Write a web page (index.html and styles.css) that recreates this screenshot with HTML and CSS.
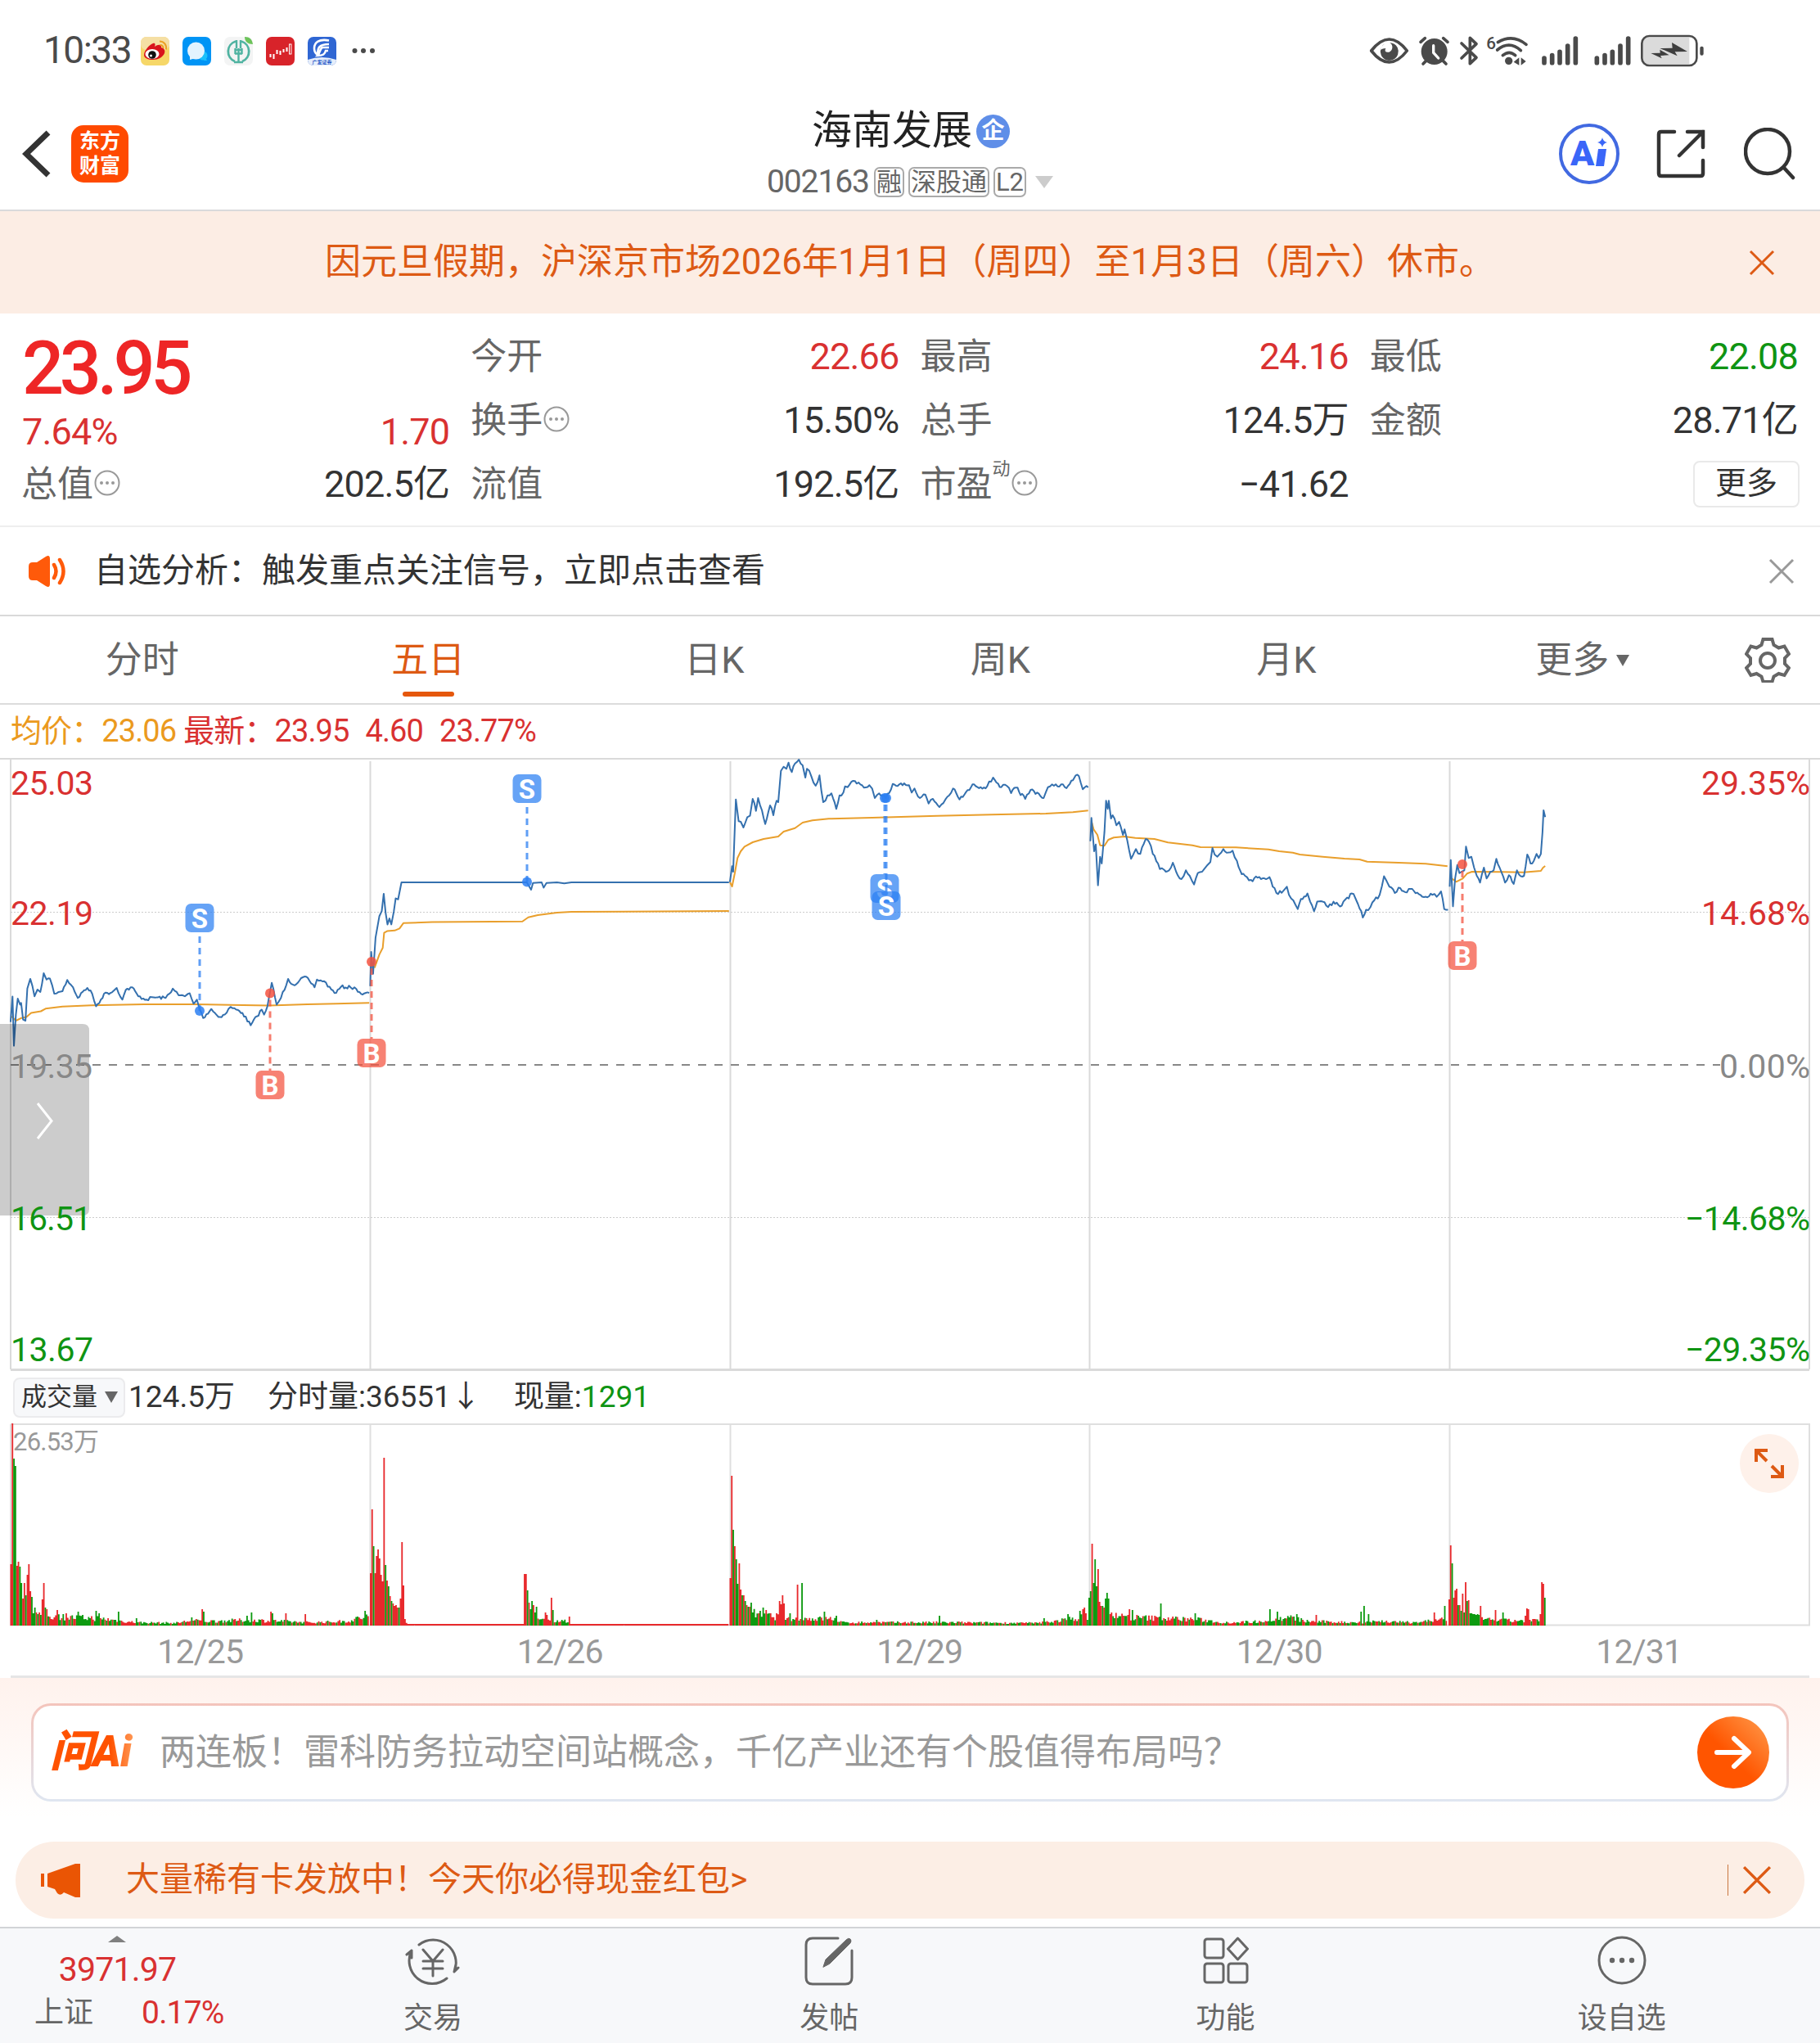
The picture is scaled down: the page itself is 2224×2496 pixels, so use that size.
FILE: index.html
```
<!DOCTYPE html>
<html lang="zh-CN">

<head>
  <meta charset="utf-8">
  <meta name="viewport" content="width=device-width">
  <title>海南发展 002163</title>
  <link rel="stylesheet" href="styles.css">
</head>

<body>
  <div class="status">
    <span class="time">10:33</span>
    <div class="apps">
      <svg class="app" viewBox="0 0 35 35">
        <rect width="35" height="35" rx="7" fill="#f6d768"/>
        <rect width="35" height="16" rx="7" fill="#f5dfa4"/>
        <path d="M4 22C4 17 11 9 15 8c3-1 3 2 2 4 4-3 9-3 8 1 4 1 5 4 4 7-2 5-8 8-14 8C9 28 4 26 4 22z" fill="#d9141c"/>
        <ellipse cx="14" cy="21" rx="8.5" ry="6" fill="#fff"/>
        <circle cx="14" cy="22" r="4.8" fill="#111"/>
        <circle cx="12.5" cy="23" r="1.5" fill="#fff"/>
        <path d="M23 5.500c5 0 9 4 8 10M23.500 10c3 0 4 2 4 4" fill="none" stroke="#eba126" stroke-width="2"/>
      </svg>
      <svg class="app" viewBox="0 0 35 35">
        <rect width="35" height="35" rx="7" fill="#0094f5"/>
        <circle cx="25" cy="23" r="5.5" fill="#1cc0fb"/>
        <path d="M26 29l4 0-2-4z" fill="#1cc0fb"/>
        <circle cx="16.5" cy="17" r="10.5" fill="#e3f3fe"/>
        <path d="M9 22l0 6 7-2z" fill="#e3f3fe"/>
      </svg>
      <svg class="app" viewBox="0 0 35 35">
        <rect width="35" height="35" rx="7" fill="#f3f4f4"/>
        <path d="M14 5.500A13 13 0 0 0 13 30M21 5.500A13 13 0 0 1 22 30" fill="none" stroke="#4fb3a1" stroke-width="2.8"/>
        <path d="M17.500 14v18M12 31h11M15 4v10M20 4v10M13 16h9M13 20.500h9M13.500 14v7M21.500 14v7" stroke="#4fb3a1" stroke-width="2.4" fill="none"/>
        <path d="M25 0c6 0 9 3 10 9-6 0-10-3-10-9z" fill="#6cc35a"/>
      </svg>
      <svg class="app" viewBox="0 0 35 35">
        <rect width="35" height="35" rx="7" fill="#d8232a"/>
        <path d="M5.500 21v4M9.500 21v6M13.500 16v5M17.500 17v5M21.500 15v4M25.500 13v5" stroke="#fff" stroke-width="2"/>
        <rect x="28.5" y="9" width="2.4" height="12" fill="none" stroke="#fff" stroke-width="1"/>
      </svg>
      <svg class="app" viewBox="0 0 35 35">
        <rect width="35" height="35" rx="7" fill="#2f66d3"/>
        <path d="M0 28q17-6 35 0a7 7 0 0 1-7 7H7a7 7 0 0 1-7-7z" fill="#e6eefb"/>
        <path d="M26 4.500C14 2 8 7 8 14c0 4 1 6 4 8 0-9 2-13 14-13M26 13h-8c-3 1-3 7-6 10 7 0 9-2 10-6h3" fill="none" stroke="#fff" stroke-width="2.6"/>
        <text class="gf" x="17.5" y="33">广发证券</text>
      </svg>
    </div>
    <svg class="dots" viewBox="0 0 28 8"><circle cx="3.5" cy="4" r="3"/><circle cx="14" cy="4" r="3"/><circle cx="25" cy="4" r="3"/></svg>
    <svg class="sys" viewBox="40 50 1230 150">
      <g fill="none" stroke="#4a4a4a" stroke-width="11" stroke-linecap="round" stroke-linejoin="round">
        <path d="M48 125q66-84 131 0q-65 84-131 0z"/>
        <path d="M229 93l16-14M328 93l-16-14M238 173l10-10M322 173l-10-10"/>
        <path d="M379 98l54 52-23 22V78l23 22-54 52"/>
        <path d="M512 94q54-32 104 8M510 122q44-36 86 2M530 142q24-20 46 0"/>
      </g>
      <g fill="#4a4a4a">
        <path d="M102 97a33 33 0 1 0 42 16a33 33 0 0 0-28-17a19 19 0 0 1-3 34q-20 2-12-14-12 0-18 5 2-18 19-24z"/>
        <circle cx="279" cy="128" r="48"/>
        <circle cx="552" cy="162" r="14"/>
        <path d="M590 150v28l-20-12zM597 150v28l18-14z"/>
        <path d="M1106 116l46-1-2-20 57 33-46 1 9 15z"/>
        <path d="M1073 134l34-1-1-12 34 20-32 2 5 10z"/>
        <rect x="1253" y="109" width="13" height="33" rx="6"/>
      </g>
      <path d="M276 106v26l18 20" fill="none" stroke="#fff" stroke-width="10" stroke-linecap="round"/>
      <text class="wifi6" x="470" y="118">6</text>
      <g stroke="#4a4a4a" stroke-width="17" stroke-linecap="round">
        <path d="M682 152v17M711 142v27M739 129v40M768 107v62M797 80v89"/>
        <path d="M875 152v17M904 142v27M932 129v40M961 107v62M990 80v89"/>
      </g>
      <path d="M1064 76h150v98h-150q-20 0-20-20v-58q0-20 20-20z" fill="#000" opacity=".14"/>
      <rect x="1040" y="71" width="201" height="108" rx="27" fill="none" stroke="#4a4a4a" stroke-width="8"/>
    </svg>
  </div>

  <header>
    <div class="left">
      <svg class="back" viewBox="0 0 36 60"><path d="M32 4L5 30l27 26"/></svg>
      <div class="logo">东方<br>财富</div>
    </div>
    <div class="title">
      <h1>海南发展<span class="qi">企</span></h1>
      <p><span class="code">002163</span><span class="tag">融</span><span class="tag">深股通</span><span class="tag">L2</span><i class="tri"></i></p>
    </div>
    <div class="right">
      <svg class="ai" viewBox="0 0 74 74">
        <circle cx="37" cy="37" r="35" fill="none" stroke="#4169e1" stroke-width="4"/>
        <text x="14" y="51">A</text>
        <path d="M48 31h10l-3 21H45z" fill="#3a66f8"/>
        <path d="M53 17q1 5 6 6-5 1-6 6-1-5-6-6 5-1 6-6z" fill="#3a66f8"/>
      </svg>
      <svg class="share" viewBox="0 0 60 60"><path d="M22 3H6Q3 3 3 6v48q0 3 3 3h48q3 0 3-3V38M38 3h19v19M57 3L28 32"/></svg>
      <svg class="search" viewBox="0 0 64 64"><circle cx="29" cy="29" r="27"/><path d="M49 49l11 12"/></svg>
    </div>
  </header>

  <div class="notice">
    <span>因元旦假期，沪深京市场2026年1月1日（周四）至1月3日（周六）休市。</span>
    <svg class="close" viewBox="0 0 30 30"><path d="M1 1l28 28M29 1L1 29"/></svg>
  </div>

  <section class="quote">
    <div class="col">
      <div class="price">23.95</div>
      <div class="row change"><b class="up">7.64%</b><b class="up">1.70</b></div>
      <div class="row"><span>总值<svg class="more" viewBox="0 0 32 32"><use href="#dot3"/></svg></span><b>202.5亿</b></div>
    </div>
    <div class="col">
      <div class="row"><span>今开</span><b class="up">22.66</b></div>
      <div class="row"><span>换手<svg class="more" viewBox="0 0 32 32"><use href="#dot3"/></svg></span><b>15.50%</b></div>
      <div class="row"><span>流值</span><b>192.5亿</b></div>
    </div>
    <div class="col">
      <div class="row"><span>最高</span><b class="up">24.16</b></div>
      <div class="row"><span>总手</span><b>124.5万</b></div>
      <div class="row"><span>市盈<sup>动</sup><svg class="more" viewBox="0 0 32 32"><use href="#dot3"/></svg></span><b>−41.62</b></div>
    </div>
    <div class="col">
      <div class="row"><span>最低</span><b class="down">22.08</b></div>
      <div class="row"><span>金额</span><b>28.71亿</b></div>
      <div class="row end"><span class="btn">更多</span></div>
    </div>
    <svg class="defs">
      <g id="dot3">
        <circle cx="16" cy="16" r="14.5" fill="none" stroke="#999" stroke-width="2"/>
        <circle cx="9" cy="16" r="2" fill="#999"/><circle cx="16" cy="16" r="2" fill="#999"/><circle cx="23" cy="16" r="2" fill="#999"/>
      </g>
    </svg>
  </section>

  <div class="signal">
    <svg class="horn" viewBox="0 0 46 38">
      <path d="M0 13q0-5 5-5h5L21 1q5-3 5 3v30q0 6-5 3l-11-7H5q-5 0-5-5z" fill="#ff5a0a"/>
      <path d="M31 11q5 8 0 16M38 5q9 14 0 28" fill="none" stroke="#ff5a0a" stroke-width="4.5" stroke-linecap="round"/>
    </svg>
    <span>自选分析：触发重点关注信号，立即点击查看</span>
    <svg class="close" viewBox="0 0 30 30"><path d="M1 1l28 28M29 1L1 29"/></svg>
  </div>

  <nav class="tabs">
    <a>分时</a>
    <a class="on">五日</a>
    <a>日K</a>
    <a>周K</a>
    <a>月K</a>
    <a>更多<i class="tri"></i></a>
    <svg class="gear" viewBox="0 0 56 56">
      <path d="M22.500 3h11l2 7 6 3.500 7-2 5.500 9.500-5 5v7l5 5-5.500 9-7-2-6 3.500-2 6.500h-11l-2-6.500-6-3.500-7 2-5.500-9 5-5v-7l-5-5 5.500-9.500 7 2 6-3.500z"/>
      <circle cx="28" cy="29" r="9"/>
    </svg>
  </nav>

  <div class="legend">
    <span class="avg">均价：23.06</span>
    <span class="up">最新：23.95</span>
    <span class="up">4.60</span>
    <span class="up">23.77%</span>
  </div>

  <svg class="chart" id="chart" viewBox="0 0 2224 749">
    <g class="grid">
      <path d="M0 1H2224M13 1V747M2211 1V747M452.500 4V747M892.500 4V747M1331.500 4V747M1771.500 4V747"/>
      <path class="dot" d="M13 188.500H2211M13 561.500H2211"/>
      <path class="bottom" d="M13 747.500H2211"/>
      <path class="zero" d="M13 375H2211"/>
    </g>
    <g id="lines"></g>
    <g id="marks"></g>
    <path d="M0 325h101q8 0 8 8v218q0 8-8 8H0z" fill="#000" opacity=".2"/>
    <path d="M46 422l17 21.500-17 21.500" fill="none" stroke="#fff" stroke-width="3"/>
    <rect x="2102" y="360" width="108" height="32" fill="#fff"/>
    <g class="axis">
      <text class="up" x="13" y="45" textLength="101">25.03</text>
      <text class="up" x="13" y="204" textLength="101">22.19</text>
      <text class="flat" x="13" y="391" textLength="100">19.35</text>
      <text class="down" x="13" y="577" textLength="99">16.51</text>
      <text class="down" x="13" y="737" textLength="101">13.67</text>
      <text class="up" x="2079" y="45" textLength="133">29.35%</text>
      <text class="up" x="2079" y="204" textLength="133">14.68%</text>
      <text class="flat" x="2101" y="391" textLength="111">0.00%</text>
      <text class="down" x="2059" y="577" textLength="153">−14.68%</text>
      <text class="down" x="2059" y="737" textLength="153">−29.35%</text>
    </g>
  </svg>

  <div class="volbar">
    <span class="pick">成交量<i class="tri"></i></span>
    <span>124.5万</span>
    <span>分时量:36551↓</span>
    <span>现量:<em class="down">1291</em></span>
  </div>

  <div class="volume">
    <svg viewBox="0 0 2224 248">
      <path d="M13 1H2211V246.500H13V1M452.500 1V246M892.500 1V246M1331.500 1V246M1771.500 1V246" class="frame"/>
      <path id="volUp" fill="#e8292c"/>
      <path id="volDown" fill="#0d9a10"/>
      <text x="16" y="33" textLength="105">26.53万</text>
    </svg>
    <span class="expand">
      <svg viewBox="0 0 36 36"><path d="M2 16V2h14M3 3l12 12M34 20v14H20M33 33L21 21"/></svg>
    </span>
  </div>

  <div class="dates"><span>12/25</span><span>12/26</span><span>12/29</span><span>12/30</span><span>12/31</span></div>

  <section class="ask">
    <div class="box">
      <span class="askai">问Ai</span>
      <span class="hint">两连板！雷科防务拉动空间站概念，千亿产业还有个股值得布局吗？</span>
      <span class="go"><svg viewBox="0 0 46 42"><path d="M3 21h38M24 4l18 17-18 17"/></svg></span>
    </div>
  </section>

  <div class="promo">
    <svg class="mega" viewBox="0 0 48 42"><path d="M0 13h4v16H0zM8 13L42 1h6v41h-6l-14-6q-4 5-8 1l-3-5-9-3z" fill="#ea5504"/></svg>
    <span>大量稀有卡发放中！今天你必得现金红包&gt;</span>
    <i class="sep"></i>
    <svg class="close" viewBox="0 0 30 30"><path d="M1 1l28 28M29 1L1 29"/></svg>
  </div>

  <footer>
    <div class="index">
      <i class="tri"></i>
      <b>3971.97</b>
      <p><span>上证</span><b>0.17%</b></p>
    </div>
    <a>
      <svg viewBox="0 0 68 62"><path d="M17 12A28 28 0 0 1 60 45l2-9M60 45l5-5M51 53A28 28 0 0 1 8 19l-6 5M8 19v9M22 18l12 14 12-14M34 32v18M22 32h24M22 41h24"/></svg>
      <span>交易</span>
    </a>
    <a>
      <svg viewBox="0 0 68 62"><path d="M45 4H14q-8 0-8 8v40q0 8 8 8h40q8 0 8-8V19"/><path d="M27 39l3-9L55 6q3-3 5-1t0 5L35 35z" fill="#666" stroke-width="1"/></svg>
      <span>发帖</span>
    </a>
    <a>
      <svg viewBox="0 0 68 62"><rect x="8" y="5" width="23" height="23" rx="3"/><rect x="8" y="35" width="23" height="23" rx="3"/><rect x="37" y="35" width="23" height="23" rx="3"/><path d="M48.500 4l12 13-12 13-12-13z"/></svg>
      <span>功能</span>
    </a>
    <a>
      <svg viewBox="0 0 68 62"><circle cx="34" cy="31" r="28"/><g fill="#666" stroke="none"><circle cx="22" cy="31" r="3.2"/><circle cx="34" cy="31" r="3.2"/><circle cx="46" cy="31" r="3.2"/></g></svg>
      <span>设自选</span>
    </a>
  </footer>
  <script src="chart.js"></script>
</body>

</html>
```

FILE: styles.css
```
* {
  box-sizing: border-box;
}

html,
body {
  margin: 0;
  width: 100%;
  height: 100%;
}

body {
  display: flex;
  flex-direction: column;
  background: #fff;
  color: #333;
  font-family: Roboto, "Noto Sans CJK SC", sans-serif;
  line-height: 1.2;
  overflow: hidden;
}

body > * {
  flex: none;
}

h1,
p {
  margin: 0;
  font-weight: 400;
}

b,
em,
i {
  font-weight: 400;
  font-style: normal;
}

svg {
  display: block;
  flex: none;
}

.up {
  color: #d93131;
  fill: #d93131;
}

.down {
  color: #0f9413;
  fill: #0f9413;
}

.flat {
  fill: #888;
}

.tri {
  display: inline-block;
  border: 8px solid transparent;
  border-top: 14px solid #666;
  border-bottom: 0;
}

.close {
  width: 30px;
  height: 30px;
  overflow: visible;
  fill: none;
  stroke: #dd5a14;
  stroke-width: 3;
}

/* 状态栏 */
.status {
  display: flex;
  align-items: center;
  height: 124px;
  padding: 0 141px 0 53px;
}

.time {
  width: 119px;
  font-size: 46px;
  letter-spacing: -1.5px;
  color: #4a4a4a;
}

.apps {
  display: flex;
  gap: 16px;
}

.app {
  width: 35px;
  height: 35px;
}

.gf {
  font-size: 6px;
  font-weight: 700;
  text-anchor: middle;
  fill: #2a5cc8;
}

.dots {
  width: 28px;
  height: 8px;
  margin-left: 19px;
  fill: #4a4a4a;
}

.sys {
  width: 410px;
  height: 50px;
  margin-left: auto;
}

.wifi6 {
  font-size: 62px;
  font-weight: 500;
  fill: #4a4a4a;
}

/* 标题 */
header {
  display: grid;
  grid-template-columns: 1fr auto 1fr;
  height: 134px;
  border-bottom: 2px solid #d9dadb;
}

.left,
.right {
  display: flex;
  align-items: center;
  padding-bottom: 5px;
}

.left {
  padding-left: 27px;
}

.right {
  justify-content: flex-end;
  padding-right: 29px;
}

.back {
  width: 36px;
  height: 60px;
  fill: none;
  stroke: #333;
  stroke-width: 7;
}

.logo {
  width: 70px;
  height: 70px;
  margin-left: 24px;
  padding-top: 5px;
  border-radius: 15px;
  background: #ff4a00;
  color: #fff;
  font-size: 25px;
  font-weight: 700;
  line-height: 30px;
  text-align: center;
}

.title {
  display: flex;
  flex-direction: column;
  align-items: center;
}

.title h1 {
  display: flex;
  align-items: center;
  height: 72px;
  margin-left: 2px;
  font-size: 49px;
  color: #222;
}

.qi {
  width: 41px;
  height: 41px;
  margin-left: 5px;
  border-radius: 50%;
  background: #5f8ee8;
  color: #fff;
  font-size: 28px;
  font-weight: 700;
  line-height: 40px;
  text-align: center;
}

.title p {
  display: flex;
  align-items: center;
  height: 53px;
  color: #666;
}

.code {
  margin-right: 6px;
  font-size: 39px;
  letter-spacing: -1.1px;
}

.tag {
  height: 37px;
  margin-right: 5px;
  padding: 0 1px;
  border: 2px solid #aaa;
  border-radius: 7px;
  font-size: 31px;
  line-height: 33px;
}

.title .tri {
  margin-left: 6px;
  border-width: 15px 11px 0;
  border-top-color: #ccc;
}

.ai {
  width: 74px;
  height: 74px;
}

.ai text {
  font-size: 43px;
  font-weight: 900;
  fill: #3a66f8;
}

.share {
  width: 60px;
  height: 60px;
  margin-left: 45px;
}

.search {
  width: 64px;
  height: 64px;
  margin-left: 47px;
}

.share,
.search {
  fill: none;
  stroke: #333;
  stroke-width: 4.5;
  stroke-linecap: round;
}

/* 休市公告 */
.notice {
  position: relative;
  display: flex;
  align-items: center;
  justify-content: center;
  height: 125px;
  background: #fcede4;
  color: #dd5a14;
  font-size: 44px;
}

.notice .close {
  position: absolute;
  right: 56px;
}

/* 行情 */
.quote {
  display: grid;
  grid-template-columns: repeat(4, 1fr);
  gap: 27px;
  height: 261px;
  padding: 14px 27px 0;
  border-bottom: 2px solid #eee;
}

.row {
  display: flex;
  align-items: center;
  justify-content: space-between;
  height: 78px;
  font-size: 44px;
}

.row.change {
  height: 50px;
}

.row.end {
  justify-content: flex-end;
}

.row span {
  display: flex;
  align-items: center;
  margin-left: -1px;
  color: #666;
}

.row b {
  font-size: 45px;
  letter-spacing: -.8px;
}

.row sup {
  align-self: flex-start;
  margin-top: -4px;
  font-size: 22px;
  line-height: 22px;
}

.price {
  height: 106px;
  font-size: 90px;
  font-weight: 500;
  line-height: 108px;
  letter-spacing: -5.3px;
  color: #ee2626;
}

.more {
  width: 32px;
  height: 32px;
  margin: -4px 0 0 1px;
}

.row .btn {
  justify-content: center;
  width: 130px;
  height: 57px;
  margin: -2px -2px 0 0;
  border: 2px solid #e9e9e9;
  border-radius: 8px;
  font-size: 38px;
  color: #333;
}

.defs {
  display: none;
}

/* 自选分析 */
.signal {
  display: flex;
  align-items: center;
  height: 109px;
  padding: 0 32px 0 35px;
  border-bottom: 2px solid #d9d9d9;
  font-size: 41px;
}

.horn {
  width: 46px;
  height: 38px;
  margin-right: 34px;
}

.signal .close {
  margin-left: auto;
  stroke: #999;
}

/* 周期 */
.tabs {
  display: flex;
  align-items: center;
  height: 108px;
  border-bottom: 2px solid #dcdcdc;
}

.tabs a {
  display: flex;
  position: relative;
  align-items: center;
  justify-content: center;
  width: 349.5px;
  height: 106px;
  padding: 2px 2px 0 0;
  font-size: 45px;
  color: #666;
}

.tabs .on {
  color: #dd5a14;
}

.tabs .on::after {
  content: '';
  position: absolute;
  bottom: 8px;
  width: 63px;
  height: 6px;
  border-radius: 3px;
  background: #e5570c;
}

.tabs .tri {
  margin: 0 -25px 0 9px;
}

.gear {
  width: 56px;
  height: 56px;
  margin-left: 35px;
  fill: none;
  stroke: #666;
  stroke-width: 4;
}

/* 分时图 */
.legend {
  display: flex;
  align-items: center;
  height: 65px;
  padding-left: 13px;
  font-size: 38px;
  letter-spacing: -.9px;
}

.legend span {
  margin-right: 20px;
}

.legend .avg {
  margin-right: 9px;
  color: #eb9a1e;
}

.chart {
  width: 2224px;
  height: 749px;
}

.grid path {
  fill: none;
  stroke: #dadada;
  stroke-width: 2;
}

.grid .dot {
  stroke: #ccc;
  stroke-width: 1;
  stroke-dasharray: 2 2;
}

.grid .bottom {
  stroke-width: 3;
}

.grid .zero {
  stroke: #888;
  stroke-dasharray: 10 10;
}

.axis {
  font-size: 41px;
}

.line {
  fill: none;
  stroke-width: 2;
  stroke-linejoin: round;
}

.mark {
  font-size: 33px;
  font-weight: 700;
  text-anchor: middle;
  fill: #fff;
}

/* 成交量 */
.volbar {
  display: flex;
  align-items: center;
  height: 64px;
  padding-left: 16px;
  font-size: 37px;
}

.volbar span {
  margin-right: 40px;
}

.volbar .pick {
  display: flex;
  align-items: center;
  gap: 9px;
  width: 137px;
  height: 49px;
  margin-right: 4px;
  padding-left: 8px;
  border: 2px solid #ebebed;
  border-radius: 8px;
  background: #f7f8fa;
  font-size: 31px;
}

.volume {
  position: relative;
  height: 248px;
}

.volume > svg {
  width: 2224px;
  height: 248px;
}

.frame {
  fill: none;
  stroke: #dfdfdf;
  stroke-width: 2;
}

.volume text {
  font-size: 31px;
  fill: #999;
}

.expand {
  display: flex;
  position: absolute;
  top: 13px;
  right: 26px;
  align-items: center;
  justify-content: center;
  width: 72px;
  height: 72px;
  border-radius: 50%;
  background: #fef1ea;
}

.expand svg {
  width: 36px;
  height: 36px;
  fill: none;
  stroke: #dd5a14;
  stroke-width: 4;
}

.dates {
  display: grid;
  grid-template-columns: repeat(5, 439.5px);
  height: 63px;
  margin: 0 13px;
  padding-left: 12px;
  border-bottom: 3px solid #e6e6e6;
  color: #999;
  font-size: 41px;
  line-height: 63px;
  letter-spacing: -.8px;
  text-align: center;
}

/* 问Ai */
.ask {
  height: 200px;
  padding: 31px 38px 0;
  background: linear-gradient(#fff2ed, #fff 85%);
}

.box {
  display: flex;
  align-items: center;
  height: 120px;
  padding: 0 21px 0 20px;
  border: 3px solid transparent;
  border-radius: 24px;
  background: linear-gradient(#fff, #fff) padding-box, linear-gradient(#f4c4bb, #dfe6f1) border-box;
}

.askai {
  width: 134px;
  background: linear-gradient(90deg, #ff5200 55%, #ff9450 75%);
  -webkit-background-clip: text;
  background-clip: text;
  color: transparent;
  font-size: 53px;
  font-weight: 900;
  font-style: italic;
  letter-spacing: -1px;
}

.hint {
  color: #999;
  font-size: 44px;
}

.go {
  display: flex;
  align-items: center;
  justify-content: center;
  width: 88px;
  height: 88px;
  margin-left: auto;
  border-radius: 50%;
  background: linear-gradient(45deg, #ff5500 45%, #ff9040 90%);
}

.go svg {
  width: 46px;
  height: 42px;
  fill: none;
  stroke: #fff;
  stroke-width: 6;
  stroke-linecap: round;
  stroke-linejoin: round;
}

.promo {
  display: flex;
  align-items: center;
  height: 94px;
  margin: 0 19px 10px;
  padding: 0 41px 0 31px;
  border-radius: 47px;
  background: #fceee5;
  color: #dd5a14;
  font-size: 41px;
}

.mega {
  width: 48px;
  height: 42px;
  margin-right: 56px;
}

.sep {
  width: 1px;
  height: 38px;
  margin: 0 18px 0 auto;
  background: #c9763f;
}

.promo .close {
  width: 34px;
  height: 34px;
}

/* 底部导航 */
footer {
  display: flex;
  height: 142px;
  border-top: 2px solid #d2d4d7;
  background: #f7f8fa;
}

footer a {
  display: flex;
  flex-direction: column;
  align-items: center;
  width: 484.5px;
  padding-top: 8px;
  color: #666;
  font-size: 36px;
  line-height: 60px;
}

footer a svg {
  width: 68px;
  height: 62px;
  margin-bottom: 10px;
  fill: none;
  stroke: #666;
  stroke-width: 3;
  stroke-linecap: round;
  stroke-linejoin: round;
}

.index {
  display: flex;
  flex-direction: column;
  align-items: center;
  width: 287px;
  padding-top: 9px;
  color: #d93131;
  font-size: 41px;
  letter-spacing: -.8px;
}

.index .tri {
  border-width: 0 11px 8px;
  border-bottom: 8px solid #808080;
}

.index > b {
  height: 56px;
  margin-top: 6px;
  line-height: 54px;
}

.index p {
  display: flex;
  gap: 59px;
  align-self: flex-start;
  margin-left: 42px;
  line-height: 48px;
  font-size: 39px;
}

.index p span {
  color: #666;
  font-size: 36px;
  letter-spacing: 0;
}
```

FILE: chart.js
```
// 固定种子，每次画出来都一样
var seed = 7;
function rnd() {
  seed = (seed * 16807) % 2147483647;
  return seed / 2147483647;
}

// 两套坐标：前两天用 A，后三天用 B
var A = { sx: 0.5868, tx: 0, sy: 0.4082, ty: -66 };
var B = { sx: 0.6633, tx: 880, sy: 0.3333, ty: -26 };

var price = [
  [A, 2, '22,952 26,876 29,1023 33,930 37,882 42,900 44,895 48,945 53,948 57,852 63,823 72,875 78,855 84,862 91,806 97,825 104,822 113,867 122,862 130,860 140,826 152,848 162,880 172,862 182,850 192,868 200,905 210,885 220,864 230,865 243,850 255,885 262,856 275,848 288,875 305,885 320,878 345,880 360,852 372,872 385,875 395,866 403,897 410,885 416,915 423,940 440,913 455,937 468,930 480,907 492,915 505,925 522,962 535,935 545,915 550,930 557,905 560,880 566,835 576,900 585,880 600,823 610,840 620,835 634,816 645,830 655,848 660,825 675,830 690,855 700,865 710,847 730,848 742,853 755,870 769,865'],
  [A, 0, '771,845 773,742 777,808 782,700 790,635 795,620 799,568 803,625 807,660 811,642 815,660 820,622 824,582 829,585 836,534 1097,534 1106,556 1110,536 1128,534 1132,550 1138,536 1160,534 1175,537 1190,534 1518,534'],
  [B, 2.5, '18,533 22,475 24,495 29,230 34,310 38,312 43,333 50,295 55,290 60,228 66,272 70,225 77,270 83,320 92,252 98,288 104,235 107,240 112,125 117,110 122,118 126,95 132,130 138,98 145,82 152,105 157,150 160,118 168,145 176,180 183,142 190,240 198,215 205,208 214,265 220,215 227,205 230,182 235,185 245,162 255,168 265,187 275,178 280,190 285,225 293,208 305,225 318,173 330,175 348,178 353,205 358,190 368,225 378,212 384,245 392,228 404,258 415,230 422,215 429,190 441,230 450,212 468,175 480,185 492,182 503,150 512,172 518,185 528,180 536,207 545,187 562,228 572,195 584,205 596,225 604,185 615,180 628,175 635,185 641,180 650,160 655,142 661,145 668,193 672,185 678,186'],
  [B, 2.5, '682,383 684,298 689,420 692,395 696,545 700,440 703,465 708,350 711,235 714,265 716,235 720,300 723,288 730,325 735,312 742,360 745,340 750,380 757,448 766,412 774,430 784,375 790,385 797,430 810,485 818,488 827,490 834,462 840,495 850,522 858,490 865,510 873,542 880,500 888,495 898,470 903,460 907,408 911,432 916,440 927,412 933,425 944,418 952,455 958,490 967,510 978,525 990,517 1012,515 1018,550 1028,577 1044,550 1048,580 1056,600 1064,632 1070,595 1082,575 1087,605 1094,640 1100,605 1110,605 1120,625 1130,605 1145,620 1155,590 1167,577 1172,600 1178,630 1184,663 1190,635 1198,625 1205,600 1215,580 1223,512 1228,530 1233,550 1243,573 1253,555 1262,570 1275,558 1290,580 1300,587 1312,580 1320,587 1328,567 1334,632 1341,635'],
  [B, 2, '1344,550 1346,452 1350,622 1354,520 1358,470 1362,500 1366,495 1371,490 1374,403 1379,445 1384,440 1389,480 1394,510 1400,535 1407,480 1412,520 1419,495 1425,490 1430,448 1436,480 1440,500 1446,535 1453,508 1462,540 1468,490 1475,512 1481,510 1487,432 1493,465 1499,455 1504,430 1508,445 1512,430 1515,350 1517,270 1520,295']
];

var average = [
  [A, 0, '24,935 33,948 45,940 55,937 65,925 85,920 95,912 130,906 190,902 300,899 400,899 480,901 560,903 640,899 700,897 769,895'],
  [A, 0, '780,790 785,770 790,750 797,730 800,685 806,680 822,678 832,672 840,656 900,653 1088,651 1100,639 1120,632 1160,625 1190,622 1518,620'],
  [B, 0, '18,533 22,549 27,500 32,445 38,420 45,403 60,387 80,375 107,366 117,348 138,335 152,315 170,307 200,301 280,297 400,290 500,286 600,282 650,277 678,271'],
  [B, 0, '684,310 688,340 695,360 700,398 708,400 715,378 725,370 745,366 765,371 800,375 825,388 870,398 885,405 950,406 1010,413 1030,420 1055,425 1068,432 1110,440 1150,447 1178,450 1192,458 1250,462 1300,466 1340,475'],
  [B, 0, '1348,520 1356,532 1368,520 1376,502 1385,495 1440,496 1480,497 1512,492 1516,480 1520,474']
];

function points(item) {
  var s = item[0], jitter = item[1];
  var list = item[2].split(' ').map(function (p) {
    p = p.split(',');
    return [p[0] * s.sx + s.tx, p[1] * s.sy + s.ty];
  });
  var out = [];
  list.forEach(function (p, i) {
    out.push(p);
    var n = list[i + 1];
    if (!n || !jitter) return;
    var steps = Math.floor((n[0] - p[0]) / 1.83);
    for (var k = 1; k < steps; k++) {
      var t = k / steps;
      out.push([p[0] + (n[0] - p[0]) * t, p[1] + (n[1] - p[1]) * t + (rnd() - 0.5) * 2 * jitter]);
    }
  });
  return out.map(function (p) {
    return p[0].toFixed(1) + ',' + Math.max(2, p[1]).toFixed(1);
  }).join(' ');
}

function lines(series, color) {
  return series.map(function (s) {
    return '<polyline class="line" stroke="' + color + '" points="' + points(s) + '"/>';
  }).join('');
}
document.getElementById('lines').innerHTML = lines(average, '#e99f2c') + lines(price, '#3470ae');

// 买卖点：x, 圆点 y, 标签顶部 y
var marks = [
  ['S', 244, 309, 178],
  ['S', 644, 151.5, 20],
  ['B', 330, 287.5, 382],
  ['B', 454, 249, 343],
  ['S', 1081, 49, 142],
  ['S', 1083, 49, 163],
  ['B', 1787, 130, 224]
];
document.getElementById('marks').innerHTML = marks.map(function (m) {
  var x = m[1], sell = m[0] === 'S';
  var color = sell ? '#2b7ff2' : '#f4523f';
  var from = m[3] > m[2] ? m[2] + 8 : m[3] + 40;
  var to = m[3] > m[2] ? m[3] : m[2];
  return '<path d="M' + x + ' ' + from + 'V' + to + '" stroke="' + color + '" opacity=".75" stroke-width="3" stroke-dasharray="8 6"/>' +
    '<circle cx="' + x + '" cy="' + m[2] + '" r="6" fill="' + color + '" opacity=".85"/>' +
    '<rect x="' + (x - 17.5) + '" y="' + m[3] + '" width="35" height="35" rx="7" fill="' + color + '" opacity=".72"/>' +
    '<text class="mark" x="' + x + '" y="' + (m[3] + 29.5) + '">' + m[0] + '</text>';
}).join('');

// 成交量：base 是包络线，bars 是逐根指定的高度（r 红 g 绿）
var volume = [
  { x: 12.5, n: 240, base: [0, 20, 24, 16, 40, 13, 58, 12, 75, 7, 85, 5, 110, 4, 120, 8, 135, 7, 160, 9, 180, 7, 200, 5, 225, 7, 239, 15],
    bars: '0:75r 1:247r 2:204g 3:195g 4:73r 5:78r 6:72g 7:52g 8:33r 9:52r 10:37g 11:62r 12:75r 13:42r 14:35g 15:15g 16:22g 17:16r 18:14g 19:16r 20:13g 21:32r 22:52r 23:22g 24:20r 31:19r 37:15r 45:17g 57:18g 59:15g 72:17g 84:9g 121:10g 128:20r 129:17g 158:12g 161:16g 174:17r 175:15g 184:15r 197:14r 232:11g 237:18g' },
  { x: 452, n: 240, red: 1, base: [0, 20, 23, 5, 26, 2, 102, 2, 112, 9, 130, 7, 136, 2, 239, 2],
    bars: '0:64r 1:142r 2:97g 3:64r 4:85r 5:93r 6:82r 7:62r 8:54r 9:205r 10:74g 11:55r 12:48g 13:36r 14:30g 15:27r 16:24r 17:25r 18:22r 19:22g 20:33r 21:102r 22:49r 23:8r 103:63r 104:63r 105:43g 106:28r 107:20g 108:30g 109:25r 110:16g 111:23g 117:16r 118:13r 121:34r 122:19g 133:11r' },
  { x: 891.5, n: 240, base: [0, 25, 15, 20, 30, 14, 45, 11, 70, 11, 75, 5, 138, 5, 145, 5, 205, 4, 220, 8, 239, 15],
    bars: '0:58r 1:183r 2:117g 3:97r 4:81g 5:51g 6:76r 7:44r 8:37g 9:37r 10:30g 11:25r 12:23g 13:23r 14:28g 15:16g 22:22g 24:19r 31:15r 33:30r 34:26r 35:37r 36:27r 40:15g 45:50r 48:52g 63:17g 71:12g 98:7g 140:12g 210:9g 226:14g 234:18g 236:20r 237:22r' },
  { x: 1330, n: 240, base: [0, 25, 16, 16, 30, 13, 60, 11, 72, 10, 90, 5, 110, 6, 135, 13, 145, 7, 175, 5, 195, 7, 215, 5, 239, 10],
    bars: '0:34g 1:42g 2:100r 3:52g 4:81g 5:48g 6:69r 7:29r 8:24r 9:24g 10:22r 11:33g 12:40g 13:33g 14:14r 15:16r 27:20r 29:19g 48:27g 71:15g 121:20g 126:17g 139:14g 152:13r 182:17g 184:24g 187:14g 231:16r 238:24g' },
  { x: 1770, n: 65, base: [0, 25, 14, 15, 21, 10, 40, 8, 64, 8],
    bars: '0:32r 1:98r 2:76g 3:34r 4:43r 5:45r 6:25g 7:25r 8:18g 9:39r 10:16g 11:53r 12:30g 13:31r 14:15g 15:15g 16:14g 17:14g 18:13g 19:14g 20:13g 21:24r 31:19r 36:16g 51:12r 52:21r 53:20r 61:14r 62:53r 63:51r 64:34g' }
];

var up = '', down = '';
volume.forEach(function (day) {
  var fixed = {};
  day.bars.split(' ').forEach(function (b) {
    b = b.split(':');
    fixed[b[0]] = b[1];
  });
  for (var i = 0, k = 0; i < day.n; i++) {
    while (day.base[k + 2] < i) k += 2;
    var t = (i - day.base[k]) / (day.base[k + 2] - day.base[k]);
    var h = (day.base[k + 1] + (day.base[k + 3] - day.base[k + 1]) * t) * (0.45 + rnd() * 0.6);
    var red = rnd() < 0.5 || (day.red && h < 2.2);
    if (fixed[i]) {
      h = parseInt(fixed[i], 10);
      red = fixed[i].slice(-1) === 'r';
    }
    h = Math.max(2, h);
    var d = 'M' + (day.x + i * 1.826).toFixed(2) + ' ' + (247 - h).toFixed(1) + 'h1.83V247h-1.83z';
    if (red) up += d; else down += d;
  }
});
document.getElementById('volUp').setAttribute('d', up);
document.getElementById('volDown').setAttribute('d', down);
```
